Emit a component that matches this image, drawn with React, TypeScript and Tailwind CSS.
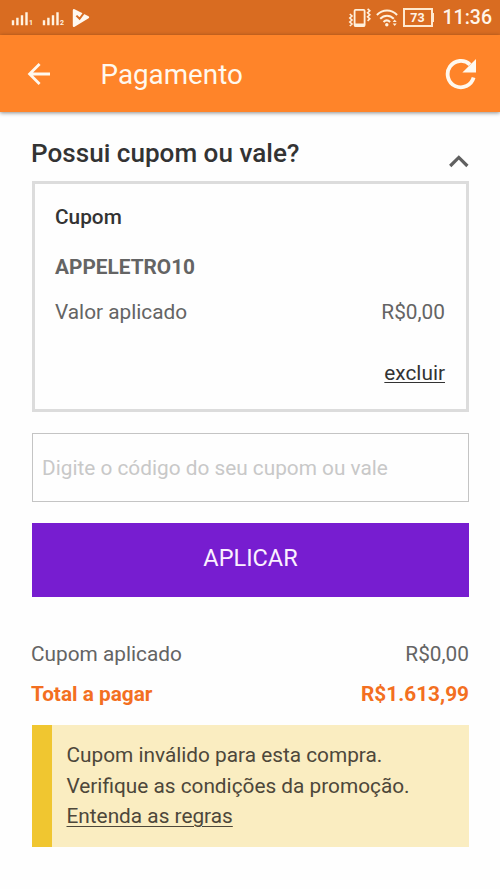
import React from 'react';

const Signal = ({ sim }: { sim: string }) => (
  <svg width="22" height="16" viewBox="0 0 22 16" fill="none" stroke="#fff3e2" strokeWidth="2.4">
    <path d="M2 15.2v-5M6.4 15.2v-7.5M11 15.2v-10M15.5 15.2v-13" />
    <text x="18" y="15.4" fill="#fff3e2" stroke="none" fontSize="7" fontWeight="700" fontFamily="Roboto">
      {sim}
    </text>
  </svg>
);

const PlayIcon = () => (
  <svg width="18" height="20" viewBox="0 0 18 20">
    <path d="M2 2.2 16 9.3 2 17.8Z" fill="#fff8ef" stroke="#fff8ef" strokeWidth="2.4" strokeLinejoin="round" />
    <path d="m4.4 7.6 3.2 3.2 6.2-8.4" fill="none" stroke="#d96d22" strokeWidth="2" />
  </svg>
);

const VibrateIcon = () => (
  <svg width="24" height="20" viewBox="0 0 24 20" fill="none" stroke="#fff0dc">
    <rect x="6.6" y="1.8" width="10" height="16.2" rx="1" strokeWidth="1.8" />
    <path d="M6.6 17h10" strokeWidth="3" />
    <path
      d="m1.8 6 2.2 2-2.2 2L4 12l-2.200 2L4 16l-2.200 2M19.600.8l2.200 2-2.200 2 2.200 2-2.200 2 2.200 2-2.200 2"
      strokeWidth="1.600"
    />
  </svg>
);

const WifiIcon = () => (
  <svg width="22" height="18" viewBox="0 0 22 18" fill="none" stroke="#fff0dc" strokeWidth="2">
    <path d="M.9 6C6.700 0 15.300 0 21.100 6M4.200 9.700c4-4.100 9.600-4.100 13.600 0M7.500 13c2-2 4.600-2 6.600 0" />
    <circle cx="10.800" cy="15.800" r="1.700" fill="#fff0dc" stroke="none" />
    <path d="m16.700 13 2-2.400 2 2.400ZM16.700 14.600l2 2.400 2-2.400Z" fill="#fff0dc" stroke="none" />
  </svg>
);

const BatteryIcon = ({ level }: { level: number }) => (
  <div className="flex items-center">
    <div className="flex h-[17px] w-[28px] items-center justify-center border-[1.5px] border-[#ffe9cf] pt-px text-[12.5px] leading-none font-bold outline-[0.5px] outline-[#ffe9cf]">
      {level}
    </div>
    <div className="h-[9px] w-[2px] bg-[#ffe9cf]" />
  </div>
);

const StatusBar = () => (
  <div className="flex h-[35px] items-center bg-[#d96c21] text-[#fff5e8]">
    <div className="ml-[11px] flex items-center">
      <Signal sim="1" />
      <div className="ml-[9px]">
        <Signal sim="2" />
      </div>
      <div className="ml-[8px]">
        <PlayIcon />
      </div>
    </div>
    <div className="mr-[8px] ml-auto flex items-center">
      <VibrateIcon />
      <div className="ml-[4px]">
        <WifiIcon />
      </div>
      <div className="ml-[6px]">
        <BatteryIcon level={73} />
      </div>
      <span className="ml-[9px] pt-px text-[19.5px] leading-[34px] font-medium">11:36</span>
    </div>
  </div>
);

const Header = () => (
  <header className="flex h-[77px] items-center bg-[#ff8429] text-[#fff8ee] shadow-[0_1px_4px_rgba(0,0,0,0.45)]">
    <button className="ml-[27px]">
      <svg width="24" height="24" viewBox="0 0 24 24" fill="none" stroke="currentColor" strokeWidth="2.8">
        <path d="M23 12H3M12.6 2l-10 10 10 10" />
      </svg>
    </button>
    <h1 className="ml-[49.5px] pt-[3px] text-[27.8px] leading-[40px]">Pagamento</h1>
    <button className="mr-[23px] ml-auto">
      <svg width="32" height="32" viewBox="0 0 32 32" fill="none">
        <path d="M28.6 19.6A13.2 13.2 0 1 1 25 6.6" stroke="currentColor" strokeWidth="3.8" />
        <path d="M31 1v13.6H17.4Z" fill="currentColor" />
      </svg>
    </button>
  </header>
);

const Row = ({ label, value }: { label: string; value: string }) => (
  <div className="flex justify-between">
    <span>{label}</span>
    <span>{value}</span>
  </div>
);

const App = () => {
  return (
    <div className="h-[889px] w-[500px] overflow-hidden bg-[#fefefe] font-['Roboto',sans-serif] text-[20.8px] leading-[30px] text-[#646464]">
      <StatusBar />
      <Header />

      <main className="pr-[31px] pl-[32px]">
        <div className="flex h-[69px] justify-between pt-[26px]">
          <h2 className="-ml-px text-[26.1px] font-medium text-[#333]">Possui cupom ou vale?</h2>
          <svg className="mt-[14px]" width="20" height="16" viewBox="0 0 20 16" fill="none" stroke="#606060" strokeWidth="3.2">
            <path d="m1.2 14 8.6-8.6 8.6 8.6" />
          </svg>
        </div>

        {/* Applied coupon */}
        <section className="h-[231px] border-3 border-[#dcdcdc] pt-[18px] pr-[21px] pl-[20px]">
          <h3 className="font-medium text-[#333]">Cupom</h3>
          <p className="mt-[20px] font-bold">APPELETRO10</p>
          <div className="mt-[15px]">
            <Row label="Valor aplicado" value="R$0,00" />
          </div>
          <div className="mt-[31px] text-right text-[#333]">
            <a className="underline decoration-1 underline-offset-2">excluir</a>
          </div>
        </section>

        <input
          className="mt-[21px] block h-[69px] w-full border border-[#c4c4c4] px-[9px] placeholder:text-[#c8c8c8]"
          placeholder="Digite o código do seu cupom ou vale"
        />

        <button className="mt-[21px] block h-[74px] w-full bg-[#771dd0] pb-[4px] text-[23.5px] text-[#fbf0ff]">
          APLICAR
        </button>

        {/* Totals */}
        <div className="mt-[42px] -ml-px">
          <Row label="Cupom aplicado" value="R$0,00" />
        </div>
        <div className="mt-[10px] -ml-px font-bold text-[#f36f21]">
          <Row label="Total a pagar" value="R$1.613,99" />
        </div>

        <div className="mt-[16px] h-[122px] border-l-[20px] border-[#f0c630] bg-[#faedc1] pt-[15px] pl-[14.5px] leading-[30.5px] text-[#4d473a]">
          <p>Cupom inválido para esta compra.</p>
          <p>Verifique as condições da promoção.</p>
          <a className="underline decoration-1 underline-offset-3">Entenda as regras</a>
        </div>
      </main>
    </div>
  );
};

export default App;
